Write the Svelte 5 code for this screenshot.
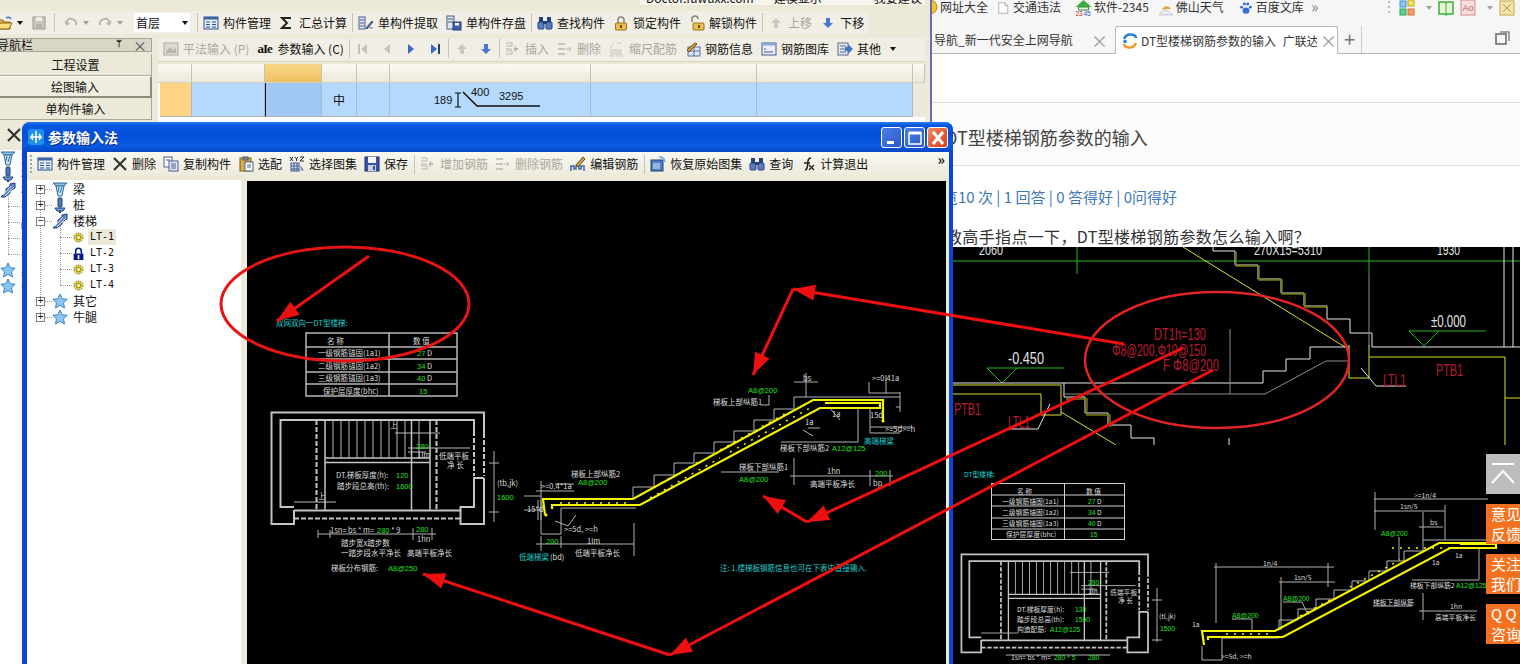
<script>
  // icon bodies, 16x16 unless noted
  const icons = {
    folder: `<path d="M1 5h5l1 2h6v7H1z" fill="#e8b93a" stroke="#8a6a14"/><path d="M3 8h12l-3 6H1z" fill="#f7dd7a" stroke="#8a6a14"/><path d="M9 3q3-2 5 1" fill="none" stroke="#3a6cc8" stroke-width="1.5"/>`,
    saveg: `<rect x="2" y="2" width="12" height="12" fill="#c9c7bd" stroke="#9c9a90"/><rect x="5" y="2" width="6" height="4" fill="#eeece4"/><rect x="5" y="9" width="6" height="5" fill="#b5b3a8"/>`,
    undo: `<path d="M3 9q1-6 6-5t4 6" fill="none" stroke="#b9b7ab" stroke-width="2"/><path d="M1 6l3 5 3-3z" fill="#b9b7ab"/>`,
    redo: `<path d="M13 9q-1-6-6-5t-4 6" fill="none" stroke="#b9b7ab" stroke-width="2"/><path d="M15 6l-3 5-3-3z" fill="#b9b7ab"/>`,
    list: `<rect x="1" y="2" width="14" height="12" fill="#e4edf8" stroke="#2f4f8f"/><rect x="1" y="2" width="14" height="2.5" fill="#3a64a8"/><path d="M3 7h4M3 9.500h4M3 12h4M9 7h4M9 9.500h4M9 12h4" stroke="#2f4f8f"/>`,
    sigma: `<path d="M13 3H4l5 5-5 5h9" transform="translate(-1)" fill="none" stroke="#222" stroke-width="2"/>`,
    extract: `<rect x="1" y="2" width="6" height="12" fill="#dfe6f2" stroke="#4a5f8a"/><path d="M2 5h4M2 8h4M2 11h4" stroke="#4a5f8a"/><path d="M8 13l6-7 1 1-6 7z" fill="#4e79b8" stroke="#2f4f8f"/><path d="M9 11l3 2h3" fill="none" stroke="#777"/>`,
    store: `<rect x="1" y="1" width="7" height="13" fill="#dfe6f2" stroke="#4a5f8a"/><path d="M2 4h5M2 7h5" stroke="#4a5f8a"/><rect x="7" y="7" width="8" height="8" fill="#3e5fa8" stroke="#26407a"/><rect x="9" y="8" width="4" height="2.500" fill="#fff"/>`,
    bino: `<rect x="2" y="2" width="4" height="5" fill="#26407a"/><rect x="10" y="2" width="4" height="5" fill="#26407a"/><rect x="1" y="7" width="6" height="7" rx="1" fill="#5a7fc0" stroke="#26407a"/><rect x="9" y="7" width="6" height="7" rx="1" fill="#5a7fc0" stroke="#26407a"/><rect x="6" y="6" width="4" height="3" fill="#26407a"/>`,
    lock: `<path d="M5 8V5a3 3 0 0 1 6 0v3" fill="none" stroke="#8a8578" stroke-width="1.500"/><rect x="2.500" y="8" width="11" height="7" rx="1" fill="#e9bf55" stroke="#9a7416"/><rect x="7" y="10" width="2" height="3" fill="#6a4c08"/>`,
    unlock: `<path d="M3 7V4a3 3 0 0 1 6 0" fill="none" stroke="#8a8578" stroke-width="1.500"/><rect x="4" y="8" width="11" height="7" rx="1" fill="#e9bf55" stroke="#9a7416"/><rect x="9" y="10" width="2" height="3" fill="#6a4c08"/>`,
    upg: `<path d="M8 3l5 5h-3v5H6V8H3z" fill="#ccc9bc"/>`,
    downb: `<path d="M8 13l5-5h-3V3H6v5H3z" fill="#4a78d0"/>`,
    pingfa: `<rect x="1" y="2" width="14" height="12" fill="#dcdad0" stroke="#aeaca0"/><path d="M3 11l4-5 3 3 3-2v5H3z" fill="#b8b6aa"/>`,
    first: `<rect x="3" y="3" width="2" height="10" fill="#c5c3b7"/><path d="M12 3v10L6 8z" fill="#c5c3b7"/>`,
    prev: `<path d="M11 3v10L5 8z" fill="#c5c3b7"/>`,
    next: `<path d="M5 3v10l6-5z" fill="#3a68c8"/>`,
    last: `<path d="M4 3v10l6-5z" fill="#3a68c8"/><rect x="11" y="3" width="2" height="10" fill="#26407a"/>`,
    ins: `<path d="M1 2h6M7 2v3H1M1 8h6M1 13h6M7 13v-3H1" fill="none" stroke="#b9b7ab"/><path d="M9 8h4" stroke="#b9b7ab" stroke-width="2"/><path d="M11 5l-2 3 2 3" fill="none" stroke="#b9b7ab"/>`,
    del: `<path d="M1 3h7M1 8h7M1 13h7" stroke="#b9b7ab" stroke-width="1.500"/><path d="M9 8h5M12 6l2 2-2 2" fill="none" stroke="#b9b7ab"/>`,
    scale: `<path d="M2 15V5M2 15h12M2 5l2-3M8 2h5" fill="none" stroke="#b9b7ab" stroke-dasharray="1.500 1"/><path d="M4 14V8M6 14V8M8 14V8M10 14V8M12 14V8" stroke="#c9c7bb"/>`,
    info: `<rect x="3" y="6" width="12" height="9" fill="#dce6f4" stroke="#5a72a0"/><path d="M3 10h12M9 6v9" stroke="#5a72a0"/><path d="M2 9l8-7 2 1-8 8z" fill="#d9a042" stroke="#6a4c08"/>`,
    lib: `<rect x="1" y="2" width="14" height="12" fill="#e9eef7" stroke="#3e5a90"/><rect x="1" y="2" width="14" height="2.500" fill="#8aa6d4"/><path d="M3 8h2M3 11h9" stroke="#3e5a90"/>`,
    other: `<rect x="1" y="2" width="10" height="12" fill="#e4e8f0" stroke="#5a6a88"/><path d="M3 5h6M3 8h6M3 11h6" stroke="#5a6a88"/><path d="M8 6h3V3l5 5-5 5v-3H8z" fill="#3f78c8"/>`,
    cross: `<path d="M2 2l12 12M14 2L2 14" stroke="#333" stroke-width="2.200"/>`,
    copy: `<rect x="1" y="1" width="8" height="10" fill="#fff" stroke="#4a5f8a"/><rect x="6" y="5" width="9" height="10" fill="#dfe8f6" stroke="#4a5f8a"/><path d="M8 8h5M8 10h5M8 12h5M3 4h4" stroke="#4a5f8a"/>`,
    paste: `<rect x="2" y="2" width="11" height="13" fill="#d9ae4e" stroke="#7a5c14"/><rect x="5" y="1" width="5" height="3" fill="#888" stroke="#555"/><rect x="7" y="6" width="8" height="9" fill="#fff" stroke="#4a5f8a"/><path d="M9 9h4M9 11h4" stroke="#4a5f8a"/>`,
    xyz: `<rect x="2" y="7" width="8" height="8" fill="#dce4f2" stroke="#3e5a90"/><path d="M2 10h8M2 13h8M5 7v8M8 7v8" stroke="#3e5a90"/><path d="M1 1l3 4M4 1L1 5M6 1l1.500 2L9 1M7.500 3v2M11 1h4l-4 4h4" fill="none" stroke="#222"/><path d="M11 9l4 5-3 1z" fill="#8a8a9a"/>`,
    saveb: `<rect x="1" y="1" width="14" height="14" fill="#3a4fa8" stroke="#1e2c70"/><rect x="4" y="1" width="8" height="6" fill="#f4f4f4"/><rect x="4" y="9" width="8" height="6" fill="#c9cde0"/><rect x="9" y="10" width="2" height="4" fill="#3a4fa8"/>`,
    edit: `<path d="M1 15V10h3v3h2v-3h3v3h2v-3h3v5" fill="none" stroke="#3a68a8" stroke-width="1.500"/><path d="M6 9l7-8 2 2-7 8z" fill="#c9a05a" stroke="#6a4c08"/>`,
    restore: `<rect x="1" y="4" width="12" height="11" fill="#4d7cc2" stroke="#26407a"/><path d="M3 8h7M3 10h7M3 12h7" stroke="#e4edf8"/><path d="M9 1q5 0 6 5" fill="none" stroke="#8ab0e8" stroke-width="2"/>`,
    fx: `<path d="M5 14q2 0 2.500-4l.5-5q.5-3 3-3" fill="none" stroke="#222" stroke-width="1.600"/><path d="M4 7h6M9 9l5 5M14 9l-5 5" stroke="#222" stroke-width="1.300"/>`,
    beam: `<path d="M1 2h14l-3 3H4z" fill="#8ec4e8" stroke="#2a6a9a"/><path d="M4 5h8l-2 10H6z" fill="#c6e4f6" stroke="#2a6a9a"/><path d="M7 6l-1 5M10 6l-2 6" stroke="#2a6a9a"/>`,
    pile: `<rect x="6" y="1" width="4" height="9" rx="1" fill="#4a7cb8" stroke="#1e3f78"/><path d="M3 11h10l-2 3H5z" fill="#6f9fd4" stroke="#1e3f78"/><rect x="7" y="14" width="2" height="2" fill="#1e3f78"/>`,
    stairs: `<path d="M1 15l5-5V7l4-3V2l5-1v5l-5 3v2l-5 4z" fill="#5f86c8" stroke="#1e3f78"/><path d="M3 13l8-9M5 14l9-9" stroke="#d4e2f6"/>`,
    gear: `<circle cx="8" cy="8" r="5.500" fill="#f0e040" stroke="#555" stroke-dasharray="2 1"/><circle cx="8" cy="8" r="3" fill="none" stroke="#776a10"/><circle cx="8" cy="8" r="1.200" fill="#fff"/>`,
    pad: `<path d="M4.500 8V5a3.500 3.500 0 0 1 7 0v3" fill="none" stroke="#0a1a8a" stroke-width="2"/><rect x="2" y="8" width="12" height="8" fill="#0a1a8a"/><rect x="7" y="10" width="2" height="5" fill="#fff"/>`,
    star: `<path d="M8 1l2.200 4.700 5 .6-3.700 3.500 1 5.200L8 12.400 3.500 15l1-5.200L.8 6.300l5-.6z" fill="#8cc4f0" stroke="#3a86c8"/>`,
    ball: `<circle cx="8" cy="7" r="7" fill="#f2c81e" stroke="#b88a10"/>`,
    page: `<path d="M1 1h8l4 4v10H1z" fill="#fff" stroke="#999"/><path d="M9 1v4h4" fill="none" stroke="#999"/>`,
    house: `<path d="M8 0L0 7h16z" fill="#3cae3c"/><path d="M3 7h10v3H3z" fill="#e8f4e0" stroke="#3a8a3a"/><text x="0" y="15.500" font-size="6.500" font-family="Liberation Sans" fill="#d02020">23</text><text x="8" y="15.500" font-size="6.500" font-family="Liberation Sans" fill="#2060c0">45</text>`,
    sun: `<path d="M1 15l5-6 4 2 5 4z" fill="#e8ecf2" stroke="#c4c8d0"/><path d="M4 9a5 5 0 0 1 9 0z" fill="#f0a030"/>`,
    paw: `<ellipse cx="8" cy="11" rx="4" ry="3.500" fill="#3b6fd8"/><circle cx="3" cy="7" r="1.700" fill="#3b6fd8"/><circle cx="6.200" cy="3.500" r="1.700" fill="#3b6fd8"/><circle cx="10" cy="3.500" r="1.700" fill="#3b6fd8"/><circle cx="13" cy="7" r="1.700" fill="#3b6fd8"/>`,
    brand: `<path d="M2 6q2-5 7-4.500T14 5" fill="none" stroke="#2a7fd4" stroke-width="2.500"/><path d="M14 10q-2 5-7 4.500T2 11" fill="none" stroke="#f29a2e" stroke-width="2.500"/><circle cx="3" cy="8.500" r="1.800" fill="#2a7fd4"/>`,
    apps: `<rect x="1" y="1" width="6" height="6" fill="#8ec4f0" stroke="#4090d8" /><rect x="9" y="0" width="6" height="6" fill="#f8e060" stroke="#c8a810"/><rect x="1" y="9" width="6" height="6" fill="#60d090" stroke="#28a060"/><rect x="9" y="9" width="6" height="6" fill="#f4a070" stroke="#d87030"/>`,
    book: `<path d="M1 2h6l1 1 1-1h6v12H9l-1 1-1-1H1z" fill="#e6f6d0" stroke="#3cae3c" stroke-width="1.500"/><path d="M8 3v11" stroke="#3cae3c"/>`,
    ad: `<rect x="1" y="0" width="14" height="15" fill="#f8dede" stroke="#d88"/><text x="2.500" y="11" font-size="9" font-family="Liberation Sans" fill="#b86868">Ao</text>`,
    bag: `<rect x="1" y="1" width="14" height="14" fill="#f2e6b0" stroke="#c4a648"/><path d="M4 4l8 8M12 4l-8 8" stroke="#d09030"/>`,
    windows: `<rect x="1" y="3" width="10" height="10" fill="none" stroke="#666" stroke-width="1.500"/><path d="M5 1h9v9" fill="none" stroke="#888" stroke-width="1.500"/>`
  };

  const row1 = [
    { icon: 'list', label: '构件管理' }, { icon: 'sigma', label: '汇总计算' }, 'sep',
    { icon: 'extract', label: '单构件提取' }, { icon: 'store', label: '单构件存盘' }, 'sep',
    { icon: 'bino', label: '查找构件' }, { icon: 'lock', label: '锁定构件' }, { icon: 'unlock', label: '解锁构件' }, 'sep',
    { icon: 'upg', label: '上移', off: true }, { icon: 'downb', label: '下移' }
  ];
  const row2 = [
    { icon: 'pingfa', label: '平法输入 (P)', off: true }, { glyph: 'aIe', label: '参数输入 (C)' }, 'sep',
    { icon: 'first' }, { icon: 'prev' }, { icon: 'next' }, { icon: 'last' }, 'sep',
    { icon: 'upg' }, { icon: 'downb' }, 'sep',
    { icon: 'ins', label: '插入', off: true }, { icon: 'del', label: '删除', off: true }, { icon: 'scale', label: '缩尺配筋', off: true },
    { icon: 'info', label: '钢筋信息' }, { icon: 'lib', label: '钢筋图库' }, { icon: 'other', label: '其他', drop: true }
  ];
  const row3 = [
    { icon: 'list', label: '构件管理' }, { icon: 'cross', label: '删除' }, { icon: 'copy', label: '复制构件' }, { icon: 'paste', label: '选配' },
    { icon: 'xyz', label: '选择图集' }, { icon: 'saveb', label: '保存' }, 'sep',
    { icon: 'ins', label: '增加钢筋', off: true }, { icon: 'del', label: '删除钢筋', off: true }, { icon: 'edit', label: '编辑钢筋' }, 'sep',
    { icon: 'restore', label: '恢复原始图集' }, { icon: 'bino', label: '查询' }, { icon: 'fx', label: '计算退出' }
  ];

  const tree = [
    { icon: 'beam', label: '梁', exp: '+' }, { icon: 'pile', label: '桩', exp: '+' }, { icon: 'stairs', label: '楼梯', exp: '-' },
    { icon: 'gear', label: 'LT-1', sel: true }, { icon: 'pad', label: 'LT-2' }, { icon: 'gear', label: 'LT-3' }, { icon: 'gear', label: 'LT-4' },
    { icon: 'star', label: '其它', exp: '+' }, { icon: 'star', label: '牛腿', exp: '+' }
  ];

  const columns = ['', '', '', '', '', '', '', '', ''];
  const marks = [
    { icon: 'ball', label: '网址大全', ml: -10, w: 16, gap: 2 }, { icon: 'page', label: '交通违法', ml: 10, w: 12, gap: 3 },
    { icon: 'house', label: '软件-2345', ml: 14, w: 17, gap: 2 }, { icon: 'sun', label: '佛山天气', ml: 9, w: 16, gap: 2 },
    { icon: 'paw', label: '百度文库', ml: 15, w: 14, gap: 3 }
  ];
  const floats = ['意见\n反馈', '关注\n我们', 'Q Q\n咨询'];

  // cad text: x, baseline y, text, class
  const sheet1 = [
    [276, 326, '双网双向一DT型楼梯:', 'c'], [327, 344, '名  称', 'w'], [413, 344, '数  值', 'w'],
    [318, 356, '一级钢筋锚固(1a1)', 'w'], [417, 356, '27', 'g'], [427, 356, 'D', 'w'],
    [318, 369, '二级钢筋锚固(1a2)', 'w'], [417, 369, '34', 'g'], [427, 369, 'D', 'w'],
    [318, 381, '三级钢筋锚固(1a3)', 'w'], [417, 381, '40', 'g'], [427, 381, 'D', 'w'],
    [323, 394, '保护层厚度(bhc)', 'w'], [419, 394, '15', 'g'],
    [336, 478, 'DT.梯板厚度(h):', 'w'], [396, 478, '120', 'g'], [337, 489, '踏步段总高(th):', 'w'], [396, 489, '1600', 'g'],
    [416, 449, '280', 'g'], [417, 458, '1lm', 'w'], [439, 459, '低端平板', 'w'], [447, 468, '净   长', 'w'],
    [390, 428, '上', 'w'], [318, 499, '上', 'w'], [330, 533, '1sn= bs * m=', 'w'], [377, 533, '280', 'g'], [391, 533, '* 9', 'w'],
    [416, 532, '280', 'g'], [417, 542, '1hn', 'w'], [341, 546, '踏步宽x踏步数', 'w'], [341, 556, '一踏步段水平净长', 'w'], [407, 556, '高端平板净长', 'w'],
    [331, 571, '梯板分布钢筋:', 'w'], [388, 571, 'A8@250', 'g'], [497, 486, '(tb,jk)', 'w'], [497, 500, '1600', 'g'],
    [748, 393, 'A8@200', 'g'], [713, 405, '梯板上部纵筋1', 'w'], [803, 381, 'bs', 'w'], [872, 381, '>=0.41a', 'w'],
    [832, 417, '1a', 'w'], [805, 425, '1a', 'w'], [870, 418, '15d', 'w'], [885, 432, '>=5d>=h', 'w'], [864, 444, '高端梯梁', 'c'],
    [780, 451, '梯板下部纵筋2', 'w'], [832, 451, 'A12@125', 'g'], [739, 470, '梯板下部纵筋1', 'w'], [739, 482, 'A8@200', 'g'],
    [827, 474, '1hn', 'w'], [810, 487, '高端平板净长', 'w'], [875, 476, '200', 'g'], [873, 486, 'bp', 'w'],
    [571, 477, '梯板上部纵筋2', 'w'], [578, 485, 'A8@200', 'g'], [541, 489, '>=0.4*1a', 'w'], [527, 512, '15*d', 'w'], [564, 532, '>=5d, >=h', 'w'],
    [546, 544, '200', 'g'], [587, 544, '1lm', 'w'], [519, 560, '低端梯梁', 'c'], [550, 560, '(bd)', 'w'], [575, 556, '低端平板净长', 'w'],
    [720, 571, '注: 1.楼梯板钢筋信息也可在下表中直接输入.', 'c']
  ];
  const sheet2 = [
    [964, 477, 'DT型楼梯:', 'c'], [1017, 494, '名  称', 'w'], [1086, 494, '数  值', 'w'],
    [1002, 504, '一级钢筋锚固(1a1)', 'w'], [1088, 504, '27', 'g'], [1097, 504, 'D', 'w'],
    [1002, 515, '二级钢筋锚固(1a2)', 'w'], [1088, 515, '34', 'g'], [1097, 515, 'D', 'w'],
    [1002, 526, '三级钢筋锚固(1a3)', 'w'], [1088, 526, '40', 'g'], [1097, 526, 'D', 'w'],
    [1006, 537, '保护层厚度(bhc)', 'w'], [1090, 537, '15', 'g'],
    [1017, 612, 'DT.梯板厚度(h):', 'w'], [1075, 612, '130', 'g'], [1017, 622, '踏步段总高(th):', 'w'], [1075, 622, '1500', 'g'],
    [1017, 632, '构造配筋:', 'w'], [1050, 632, 'A12@125', 'g'], [1088, 585, '280', 'g'], [1088, 594, '1ln', 'w'], [1110, 595, '低端平板', 'w'], [1118, 603, '净  长', 'w'],
    [1011, 660, '1sn= bs * m=', 'w'], [1054, 660, '280 * 5', 'g'], [1088, 660, '280', 'g'], [1159, 619, '(tl,jk)', 'w'], [1160, 631, '1500', 'g'],
    [1192, 627, '1a', 'w'], [1221, 659, '>=5d, >=h', 'w'], [1263, 566, '1n/4', 'w'], [1294, 580, '1sn/5', 'w'], [1414, 498, '>=1n/4', 'w'],
    [1400, 509, '1sn/5', 'w'], [1430, 525, 'bs', 'w'], [1283, 601, 'A8@200', 'g'], [1232, 618, 'A8@200', 'g'], [1381, 536, 'A8@200', 'g'],
    [1410, 588, '梯板下部纵筋2', 'w'], [1456, 588, 'A12@125', 'g'], [1373, 605, '梯板下部纵筋', 'w'], [1450, 609, '1hn', 'w'], [1435, 620, '高端平板净长', 'w'],
    [1432, 565, '1a', 'w'], [1455, 558, '1a', 'w']
  ];

  // arrow head polygon, tip at (x2,y2)
  function head(x1, y1, x2, y2, len = 22, half = 8) {
    const d = Math.hypot(x2 - x1, y2 - y1);
    const ux = (x2 - x1) / d, uy = (y2 - y1) / d;
    const bx = x2 - ux * len, by = y2 - uy * len;
    return `${x2},${y2} ${bx - uy * half},${by + ux * half} ${bx + uy * half},${by - ux * half}`;
  }
  const arrows = [
    [369, 256, 277, 321], [1124, 344, 793, 289], [793, 289, 753, 375],
    [1183, 348, 807, 522], [807, 522, 763, 496], [1213, 370, 670, 655], [670, 655, 423, 574]
  ];
</script>

{#snippet toolbar(items)}
  {#each items as it}
    {#if it === 'sep'}
      <i class="sep"></i>
    {:else}
      <span class="tb-item" class:off={it.off}>
        {#if it.glyph}<b class="glyph">{it.glyph}</b>{:else}<svg class="ico" viewBox="0 0 16 16">{@html icons[it.icon]}</svg>{/if}
        {#if it.label}<span>{it.label}</span>{/if}
        {#if it.drop}<i class="caret"></i>{/if}
      </span>
    {/if}
  {/each}
{/snippet}

{#snippet treeView()}
  <div class="tree">
    {#each tree as n}
      <div class="node" class:child={!n.exp}>
        {#if n.exp}<span class="exp">{n.exp === '+' ? '+' : '−'}</span><i class="stub"></i>{:else}<i class="stub"></i>{/if}
        <svg class="ico" viewBox="0 0 16 16">{@html icons[n.icon]}</svg>
        <span class="nlabel" class:sel={n.sel} class:mono={!n.exp}>{n.label}</span>
      </div>
    {/each}
  </div>
{/snippet}

{#snippet planLines()}
  <g class="wall">
    <path d="M294 510V524H271.500V412.500H484V438M484 478V524H460.500V507H474V478H484M474 436V420H280.500V507H294" />
    <path d="M294 510.500H460" />
    <path class="dash" d="M294 518.500H460M484 440V476M474 438V476M316.500 420V510M436.500 420V510" />
    <path class="thin" d="M325 420V510M411.500 420V510M430 420V510M325 458H430M325 462.500H430" />
    <path class="tread" d="M333 420V458M341 420V458M349 420V458M357 420V458M365 420V458M373 420V458M381 420V458M389 420V458M397 420V458M405 420V458M419 420V458" />
    <path class="tread" d="M395 433H440M294 502H336M408 448H470M408 452H426" />
  </g>
{/snippet}

<div class="desktop">
  <!-- rebar software behind -->
  <section class="app">
    <div class="app-top">
      <div class="help">
        <span>Doctor.fuwuxx.com</span>
        <span class="h2">建模显示</span>
        <span class="h3">我要建议</span>
      </div>
    </div>
    <div class="bar bar-main">
      <svg class="ico lead" viewBox="0 0 16 16">{@html icons.folder}</svg><i class="caret mini"></i>
      <svg class="ico" viewBox="0 0 16 16">{@html icons.saveg}</svg><i class="sep wide"></i>
      <svg class="ico" viewBox="0 0 16 16">{@html icons.undo}</svg><i class="caret mini grey"></i>
      <svg class="ico" viewBox="0 0 16 16">{@html icons.redo}</svg><i class="caret mini grey"></i>
      <div class="combo">首层<i class="caret"></i></div>
      <i class="sep"></i>
      {@render toolbar(row1)}
    </div>
    <div class="work">
      <aside class="side">
        <div class="dock-head">
          <span>导航栏</span>
          <span class="dock-btns"><b>ᛘ</b><b class="x">×</b></span>
        </div>
        <button class="nav-btn">工程设置</button>
        <button class="nav-btn raised">绘图输入</button>
        <button class="nav-btn">单构件输入</button>
        <div class="side-x"><svg class="ico" viewBox="0 0 16 16">{@html icons.cross}</svg></div>
        <div class="side-tree">{@render treeView()}</div>
      </aside>
      <div class="main">
        <div class="bar bar-sub">{@render toolbar(row2)}</div>
        <div class="grid">
          {#each columns as _, i}<div class="gh" class:hot={i === 2}></div>{/each}
          <div class="gc rowhead"></div>
          <div class="gc"></div>
          <div class="gc active"></div>
          <div class="gc sym">中</div>
          <div class="gc"></div>
          <div class="gc shape">
            <svg width="201" height="33" viewBox="390 83 201 33">
              <text x="434" y="104" class="num">189</text>
              <path d="M458 93v14M455 93h6M455 107h6" stroke="#111" fill="none" stroke-width="1.200"/>
              <path d="M463 92l14 14h63" stroke="#111" fill="none" stroke-width="1.500"/>
              <text x="471" y="96" class="num">400</text>
              <text x="499" y="100" class="num">3295</text>
            </svg>
          </div>
          <div class="gc"></div>
          <div class="gc"></div>
          <div class="gc last"></div>
        </div>
      </div>
    </div>
  </section>

  <!-- browser behind, on the right -->
  <section class="browser">
    <div class="bookmarks">
      {#each marks as m}
        <span class="mark" style="margin-left:{m.ml}px;gap:{m.gap}px">
          <svg width={m.w} height="16" viewBox="0 0 16 16">{@html icons[m.icon]}</svg>{m.label}
        </span>
      {/each}
      <span class="more">»</span>
      <span class="tools">
        <i class="dots"></i>
        <svg class="ico" viewBox="0 0 16 16">{@html icons.apps}</svg><i class="caret grey"></i>
        <svg class="ico" viewBox="0 0 16 16">{@html icons.book}</svg>
        <svg class="ico" viewBox="0 0 16 16">{@html icons.ad}</svg><i class="caret grey"></i>
        <svg class="ico" viewBox="0 0 16 16">{@html icons.bag}</svg>
      </span>
    </div>
    <div class="tabs">
      <div class="tab">导航_新一代安全上网导航<span class="tx">×</span></div>
      <div class="tab on">
        <svg class="ico" viewBox="0 0 16 16">{@html icons.brand}</svg>
        <span class="tab-t">DT型楼梯钢筋参数的输入_广联达</span><span class="tx">×</span>
      </div>
      <span class="plus">+</span>
      <svg class="ico win" viewBox="0 0 16 16">{@html icons.windows}</svg>
    </div>
    <div class="page">
      <div class="page-top"></div>
      <h1>DT型楼梯钢筋参数的输入</h1>
      <p class="stats">览10 次 | 1 回答 | 0 答得好 | 0问得好</p>
      <p class="ask">教高手指点一下，DT型楼梯钢筋参数怎么输入啊？</p>
      <div class="photo">
        <svg width="567" height="417" viewBox="953 247 567 417">
          <g class="cad">
            <path class="gr" d="M953 261H1520M1077 247V274M1369 247V274M1064 368H987L1002 383L1017 368M1486 331H1409L1424 346L1439 331" />
            <path class="wh" d="M1213 247V251H1235V265H1258V279H1281V293H1304V306H1327V319H1350V333H1372V347H1520M1504 247V347M1513 247V347" />
            <path class="ol" d="M1236 252V266H1259V280H1282V294H1305V307H1328" />
            <path class="ye" d="M1183 247L1345 347M1061 412L1116 445M1369 345V378H1349V345M1369 357H1505V445M1505 398H1520M953 385H1061V415H1041V394H953" />
            <path class="wh" d="M953 383H1263V371H1286V359H1310V347H1349M1064 383V397H1085V413H1108V425H1131V438H1154V445M1361 368L1376 386H1406M1050 404L1038 429H1008M1229 438V445" />
            <path class="ol" d="M1066 399H1087V415H1110V427" />
            <path class="gy" d="M1063 394H1265L1326 361H1349M1230 329V394M1369 274V347" />
            <text class="big" x="979" y="255" font-size="14" textLength="24" lengthAdjust="spacingAndGlyphs">2060</text>
            <text class="big" x="1254" y="255" font-size="14" textLength="68" lengthAdjust="spacingAndGlyphs">270X15=5310</text>
            <text class="big" x="1437" y="255" font-size="14" textLength="23" lengthAdjust="spacingAndGlyphs">1930</text>
            <text class="big" x="1431" y="327" font-size="17" textLength="35" lengthAdjust="spacingAndGlyphs">±0.000</text>
            <text class="big" x="1008" y="364" font-size="16" textLength="36" lengthAdjust="spacingAndGlyphs">-0.450</text>
            <text class="rd" x="1436" y="376" textLength="27" lengthAdjust="spacingAndGlyphs">PTB1</text>
            <text class="rd" x="1383" y="386" textLength="23" lengthAdjust="spacingAndGlyphs">LTL1</text>
            <text class="rd" x="954" y="415" textLength="27" lengthAdjust="spacingAndGlyphs">PTB1</text>
            <text class="rd" x="1008" y="428" textLength="22" lengthAdjust="spacingAndGlyphs">LTL1</text>
            <text class="rd" x="1154" y="340" textLength="52" lengthAdjust="spacingAndGlyphs">DT1h=130</text>
            <text class="rd" x="1112" y="356" textLength="94" lengthAdjust="spacingAndGlyphs">Φ8@200,Φ10@150</text>
            <text class="rd" x="1163" y="371" textLength="56" lengthAdjust="spacingAndGlyphs">F Φ8@200</text>
            <text class="big" x="1234" y="455" font-size="14" textLength="50" lengthAdjust="spacingAndGlyphs">ATB1 120</text>
            <rect x="953" y="445" width="567" height="12" fill="#000"/>

            <rect class="tb" x="991.500" y="483.500" width="133" height="56"/>
            <path class="tb" d="M991 495H1124M991 506H1124M991 518H1124M991 529H1124M1064.500 483V539"/>
            <g transform="translate(961 554) scale(.878) translate(-271 -412)">{@render planLines()}</g>
            <path class="th" d="M1157 588V642M1152 600H1162M1152 640H1162M1006 655H1110M1374 499H1488M1375 492V530M1374 511H1445M1445 505V540M1419 527H1443M1423 512V540M1399 537V560M1214 567H1334M1216 563V623M1328 563V587M1279 582H1335M1281 577V630M1283 602H1302L1308 615M1232 619H1252V630M1479 548V580H1412M1419 611H1477M1423 593V620M1373 606H1412"/>
            <path class="st" d="M1279 630V620H1298V609H1316V599H1334V590H1352V581H1369V571H1387V561H1404V551H1423V540H1520M1202 646V660H1222V638H1279"/>
            <path class="yb" d="M1204 645L1202 631H1275L1439 543H1520"/>
            <path class="yb" d="M1208 640V637H1283L1450 548H1496V544H1460"/>
            <path class="yd" d="M1226 634H1268M1300 616L1330 600M1350 587L1400 560M1392 548H1480"/>
            {#each sheet2 as [x, y, t, c]}<text class="t {c} sm" {x} {y}>{t}</text>{/each}
          </g>
        </svg>
      </div>
    </div>
  </section>

  <!-- side buttons of the page -->
  <nav class="float">
    <div class="to-top">
      <svg width="30" height="24" viewBox="0 0 30 24"><path d="M4 2h22M4 21L15 9l11 12" fill="none" stroke="#fff" stroke-width="2"/></svg>
    </div>
    {#each floats as f}<div class="fbtn">{f}</div>{/each}
  </nav>

  <!-- dialog window on top -->
  <section class="dialog">
    <header class="title">
      <span class="title-ico">
        <svg width="14" height="14" viewBox="0 0 14 14"><path d="M7 1v12M1 7h12M4 4l-2 3 2 3M10 4l2 3-2 3" fill="none" stroke="#fff" stroke-width="1.500"/></svg>
      </span>
      <span class="title-t">参数输入法</span>
      <span class="wbtns">
        <i class="wb"><svg width="20" height="20" viewBox="0 0 20 20"><rect x="5" y="13" width="7" height="3" fill="#fff"/></svg></i>
        <i class="wb"><svg width="20" height="20" viewBox="0 0 20 20"><path d="M4 5h12v11H4z" fill="none" stroke="#fff" stroke-width="1.500"/><path d="M4 5h12" stroke="#fff" stroke-width="3"/></svg></i>
        <i class="wb close"><svg width="20" height="20" viewBox="0 0 20 20"><path d="M5 4l10 12M15 4L5 16" stroke="#fff" stroke-width="3"/></svg></i>
      </span>
    </header>
    <div class="bar bar-dlg">
      <i class="grip"></i>
      {@render toolbar(row3)}
      <span class="chev">»</span>
    </div>
    <div class="dlg-body">
      <div class="dlg-tree">{@render treeView()}</div>
      <div class="canvas">
        <svg width="699" height="483" viewBox="247 181 699 483">
          <g class="cad">
            <rect class="tb2" x="306" y="333" width="151" height="63"/>
            <path class="tb2" d="M306 347H457M306 359H457M306 372H457M306 384H457M389 333V396"/>
            {@render planLines()}
            <path class="th" d="M318 534H436M318 530V538M330 530V538M413 528V540M432 528V540M494 451V522M489 463H499M489 512H499"/>
            <path class="st" d="M633 498V487H654V475H674V463H694V453H714V442H734V431H754V420H774V409H794V397H900"/>
            <path class="st" d="M541 500V534H561V508H636M858 408V442H781M870 408V433H900M761 405H769V395M721 472H779"/>
            <path class="th" d="M541 481V520M536 491H574M538 500V520M524 496H541M524 510H541M536 544H634M541 536V551M561 536V548M634 523V556M555 484H574M806 373V397M794 382H818M869 382V393H900M886 375V393M900 392V412M896 407H900M870 427H912M790 476H893M794 458V485M870 470V486M890 470V486M829 407L840 420M808 428H820M803 430L813 436M576 515L568 526M555 521L568 526"/>
            <path class="yb" d="M545 515L543 499H633L813 400H883V422"/>
            <path class="yb" d="M552 509V505H640L820 408H880V403H825"/>
            <path class="yd" d="M560 503H628M640 495L700 461M720 450L790 411M830 403H872M650 498L720 458M730 452L810 408"/>
            <circle cx="546" cy="515" r="1.500" fill="#ff0"/><circle cx="883" cy="421" r="1.500" fill="#ff0"/>
            {#each sheet1 as [x, y, t, c]}<text class="t {c}" {x} {y}>{t}</text>{/each}
          </g>
        </svg>
      </div>
    </div>
  </section>

  <!-- red marks someone drew over the screenshot -->
  <svg class="annot" viewBox="0 0 1520 664" width="1520" height="664">
    <ellipse cx="345" cy="304" rx="124" ry="57" fill="none" stroke="#e81414" stroke-width="3"/>
    <ellipse cx="1217" cy="360" rx="132" ry="68" fill="none" stroke="#e02424" stroke-width="2.500"/>
    {#each arrows as [a, b, c, d]}
      <line x1={a} y1={b} x2={c} y2={d} stroke="#ee1010" stroke-width="3"/>
      <polygon points={head(a, b, c, d)} fill="#ee1010"/>
    {/each}
  </svg>
</div>

<style>
  :global(body) { margin: 0; background: #ece9d8; }
  .desktop {
    position: relative; width: 1520px; height: 664px; overflow: hidden;
    font-family: "Noto Sans CJK SC", "Liberation Sans", sans-serif; font-size: 12px; color: #111; background: #ece9d8;
  }
  .ico { width: 16px; height: 16px; flex: none; display: block; }
  .desktop svg text { font-family: "Noto Sans CJK SC", "Liberation Sans", sans-serif; }

  /* back window */
  .app {
    position: absolute; left: 0; top: 0; width: 930px; height: 664px; background: #ece9d8;
    border-right: 2px solid #6a6ab4; display: flex; flex-direction: column;
  }
  .app-top { height: 11px; overflow: hidden; flex: none; }
  .help {
    margin-left: 640px; width: 285px; height: 5px; background: #f6f4ec; display: flex;
    padding-left: 6px; box-sizing: border-box; overflow: hidden; line-height: 1; font-size: 12px;
  }
  .help span { margin-top: -8px; white-space: nowrap; }
  .help .h2 { margin-left: 20px; }
  .help .h3 { margin-left: 52px; }
  .bar { display: flex; align-items: center; white-space: nowrap; flex: none; }
  .bar-main { height: 23px; width: 868px; padding-left: 0; background: #f1efe5; box-sizing: border-box; }
  .lead { margin-left: -3px; }
  .caret {
    display: inline-block; width: 0; height: 0; border: 3px solid transparent; border-top: 4px solid #111; border-bottom: 0; margin-left: 5px; flex: none;
  }
  .caret.grey { border-top-color: #a5a399; }
  .caret.mini { margin: 0 8px 0 4px; }
  .sep { width: 1px; height: 19px; background: #c8c5b4; margin: 0 5px 0 -3px; flex: none; display: block; }
  .sep.wide { margin: 0 8px 0 7px; }
  .combo {
    width: 56px; height: 19px; margin: 0 7px 0 3px; background: #fff; box-sizing: border-box; padding-left: 2px;
    display: flex; align-items: center; justify-content: space-between; padding-right: 2px; line-height: 1; flex: none; font-size: 12px;
  }
  .combo + .sep { margin-left: 0; }
  .tb-item { display: flex; align-items: center; gap: 4px; margin-right: 8px; line-height: 1; flex: none; }
  .tb-item.off { color: #aaa89c; }
  .glyph { width: 16px; font: 700 13px "Liberation Serif", serif; letter-spacing: -1px; color: #111; }

  .work { display: flex; flex: 1; margin-top: 4px; min-height: 0; }
  .side { width: 152px; margin-right: 6px; flex: none; display: flex; flex-direction: column; }
  .dock-head {
    height: 12px; background: #d9d6c6; border: 1px solid #a6a493; border-left: 0; margin-bottom: 2px; flex: none;
    display: flex; justify-content: space-between; align-items: center; line-height: 1; font-size: 12px; text-indent: -3px; box-sizing: content-box;
  }
  .dock-btns { display: flex; gap: 11px; padding-right: 4px; text-indent: 0; font-weight: 400; }
  .dock-btns b { font-size: 10px; font-weight: 700; }
  .dock-btns .x { font-size: 14px; font-weight: 400; color: #555; }
  .nav-btn {
    height: 22px; width: 100%; flex: none; padding: 0; font: inherit; line-height: 1; color: #111; background: #ece9d8;
    border: 0; border-bottom: 1px solid #aca899; border-right: 1px solid #aca899;
  }
  .nav-btn.raised { background: #efede0; border-bottom: 2px solid #8e8c7e; border-right: 2px solid #8e8c7e; border-top: 1px solid #fff; }
  .side-x { height: 30px; padding-left: 6px; display: flex; align-items: center; flex: none; }
  .side-tree { flex: 1; background: #fff; overflow: hidden; width: 22px; }
  .side-tree .tree { margin-left: -25px; width: 200px; }

  .main { width: 767px; display: flex; flex-direction: column; }
  .bar-sub { height: 24px; padding-left: 5px; padding-bottom: 2px; background: #f1efe5; border-bottom: 1px solid #d8d5c4; box-sizing: border-box; }
  .grid {
    display: grid; grid-template-columns: 34px 73px 57px 35px 33px 201px 166px 156px 12px; grid-template-rows: 19px 34px 30px;
    background: #fff; margin-top: 2px; border-bottom: 0;
  }
  .gh { background: linear-gradient(#fbfaf5, #ece9d8); border-right: 1px solid #c4c2b4; border-bottom: 1px solid #d2d0c2; box-sizing: border-box; }
  .gh.hot { background: linear-gradient(#f8d888, #f0c060); }
  .gc { background: #b4d9fd; border-right: 1px solid #a9bcc8; border-bottom: 1px solid #b5b8b8; box-sizing: border-box; }
  .rowhead { background: #ffd284; margin-left: 2px; }
  .active { background: #a0c8f2; border-left: 1px solid #111; }
  .sym { display: flex; align-items: center; justify-content: center; font-size: 12px; }
  .last { background: #ece9d8; border: 0; }
  .shape svg { display: block; }
  .num { font-family: "Liberation Sans", sans-serif !important; font-size: 11px; fill: #111; }

  /* tree */
  .tree { position: relative; padding: 0; width: 214px; box-sizing: border-box; }
  .tree::before { content: ""; position: absolute; left: 13px; top: 8px; bottom: 8px; border-left: 1px dotted #999; }
  .node { display: flex; align-items: center; height: 16px; padding-left: 9px; position: relative; }
  .exp {
    width: 9px; height: 9px; box-sizing: border-box; border: 1px solid #808080; background: #fff; z-index: 1; flex: none;
    font: 10px/7px "Liberation Mono", monospace; text-align: center; color: #111;
  }
  .stub { width: 7px; border-top: 1px dotted #999; flex: none; }
  .node.child { padding-left: 33px; }
  .node.child::before { content: ""; position: absolute; left: 33px; top: -8px; height: 16px; border-left: 1px dotted #999; }
  .node.child .stub { width: 12px; }
  .node.child .ico { width: 13px; height: 13px; }
  .nlabel { margin-left: 3px; padding: 1px 2px; line-height: 14px; }
  .node.child .nlabel { margin-left: 3px; }
  .mono { font: 10px/14px "DejaVu Sans Mono", monospace; }
  .sel { background: #ece9d8; }

  /* browser */
  .browser {
    position: absolute; left: 932px; top: 0; right: 0; height: 664px; background: #fff; display: flex; flex-direction: column; overflow: hidden;
  }
  .bookmarks { height: 26px; flex: none; background: #f6f6f6; display: flex; align-items: flex-start; line-height: 14px; color: #333; white-space: nowrap; }
  .mark { display: flex; align-items: flex-start; }
  .more { margin-left: 7px; font-size: 16px; line-height: 13px; color: #888; }
  .tools { margin-left: auto; display: flex; align-items: center; gap: 6px; padding-right: 5px; height: 15px; }
  .dots { width: 2px; height: 13px; margin-right: 3px; background: repeating-linear-gradient(#bbb 0 2px, transparent 2px 5px); }
  .tabs {
    height: 27px; flex: none; background: #f6f6f6; border-bottom: 1px solid #b8b8b8; display: flex; align-items: flex-end; line-height: 1; white-space: nowrap; color: #333;
    box-sizing: content-box;
  }
  .tab { width: 182px; height: 26px; padding-left: 2px; display: flex; align-items: center; box-sizing: border-box; justify-content: space-between; padding-right: 6px; }
  .tab.on {
    width: 223px; background: #fff; border: 1px solid #b8b8b8; border-bottom: 0; border-radius: 3px 3px 0 0; margin-bottom: -1px; padding: 0 4px 0 6px; height: 28px; margin-left: 1px; gap: 3px; justify-content: flex-start;
  }
  .tab-t { width: 176px; overflow: hidden; flex: none; }
  .tx { font-size: 17px; color: #999; margin-left: auto; }
  .plus { width: 24px; height: 27px; text-align: center; font-size: 20px; line-height: 25px; color: #777; border-right: 1px solid #ccc; margin-left: 0; box-sizing: border-box; }
  .win { margin: 0 9px 6px auto; }
  .page { flex: 1; display: flex; flex-direction: column; min-height: 0; }
  .page-top { height: 48px; flex: none; border-bottom: 1px solid #ddd; }
  h1 {
    margin: 0; height: 62px; line-height: 68px; flex: none; font-size: 18px; font-weight: 400; padding-left: 13px; color: #444; background: #fcfcfc; border-bottom: 1px solid #ddd;
  }
  .stats { margin: 22px 0 0; height: 18px; line-height: 18px; font-size: 15px; padding-left: 11px; color: #3d78b6; flex: none; white-space: nowrap; }
  .ask { margin: 20px 0 0; height: 20px; line-height: 20px; font-size: 16px; padding-left: 14px; letter-spacing: .35px; color: #333; flex: none; white-space: nowrap; }
  .photo { margin: 1px 0 0 21px; flex: 1; background: #000; overflow: hidden; }
  .photo svg, .canvas svg { display: block; }

  /* floating page buttons */
  .float { position: absolute; right: 0; top: 454px; width: 34px; display: flex; flex-direction: column; gap: 10px; }
  .to-top { height: 40px; background: #bdbdbd; display: flex; align-items: center; justify-content: center; }
  .fbtn {
    height: 40px; background: #f4721f; color: #fff; font-size: 15px; line-height: 20px; padding-left: 5px; white-space: pre; overflow: hidden; letter-spacing: 0; box-sizing: border-box;
  }

  /* dialog */
  .dialog {
    position: absolute; left: 22px; top: 122px; width: 931px; height: 542px; background: #ece9d8; display: flex; flex-direction: column;
    border-radius: 8px 8px 0 0; overflow: hidden;
  }
  .title {
    height: 30px; flex: none; display: flex; align-items: center; padding: 0 5px 0 6px; box-sizing: border-box;
    background: linear-gradient(#2a7ff0 0, #0a58e0 3px, #0450d8 12px, #0a5ae2 24px, #0746c4 30px);
  }
  .title-ico { width: 16px; height: 16px; background: #1a90e8; border-radius: 3px; display: flex; align-items: center; justify-content: center; margin-right: 4px; }
  .title-t { color: #fff; font-size: 14px; font-weight: 700; line-height: 1; text-shadow: 1px 1px 0 #0a2a80; }
  .wbtns { margin-left: auto; display: flex; gap: 2px; }
  .wb {
    width: 21px; height: 21px; box-sizing: border-box; border: 1px solid #fff; border-radius: 3px; background: linear-gradient(135deg, #4a80e8, #2a58c8); display: block;
  }
  .wb svg { display: block; }
  .wb.close { background: linear-gradient(135deg, #f08a60, #d83c18); }
  .bar-dlg { height: 26px; padding-bottom: 2px; box-sizing: border-box; margin: 0 4px 0 5px; background: linear-gradient(#f9f8f2, #ece9d8); position: relative; }
  .grip { width: 2px; height: 18px; margin: 0 5px 0 3px; background: repeating-linear-gradient(#a9a797 0 2px, transparent 2px 4px); flex: none; }
  .bar-dlg .tb-item { margin-right: 7px; }
  .bar-dlg .sep { margin: 0 5px 0 -1px; }
  .chev { position: absolute; right: 4px; top: 0; font-size: 14px; font-weight: 700; line-height: 14px; }
  .dlg-body { flex: 1; display: flex; min-height: 0; margin: 3px 7px 0 5px; }
  .dlg-tree { width: 214px; margin-top: -1px; background: #fff; padding-top: 0; margin-right: 6px; flex: none; }
  .dlg-tree .tree { margin-top: 1px; }
  .canvas { width: 699px; flex: none; background: #000; }
  .dialog { border-right: 0; box-shadow: inset -4px 0 0 #0a46d2, inset 5px 0 0 #0a46d2; }

  /* cad */
  .cad { fill: none; }
  .t { font-size: 7.500px; fill: #dcdcdc; }
  .t.sm { font-size: 6.800px; }
  .t.c { fill: #1fd0d0; }
  .t.g { fill: #22e022; font-family: "Liberation Sans", sans-serif !important; }
  .wall path { fill: none; stroke: #c4c4c4; stroke-width: 2; }
  .wall .dash { stroke-dasharray: 5 2; }
  .wall .thin { stroke-width: 1.500; }
  .wall .tread { stroke-width: 1; stroke: #bbb; }
  .tb2 { stroke: #b8b8b8; stroke-width: 1.500; fill: none; }
  .tb { stroke: #cfcfcf; stroke-width: 1; fill: none; }
  .th { stroke: #b0b0b0; stroke-width: 1; fill: none; }
  .st { stroke: #b4b4b4; stroke-width: 1; fill: none; }
  .yb { stroke: #f4f400; stroke-width: 2.200; fill: none; }
  .yd { stroke: #f4f400; stroke-width: 1.500; stroke-dasharray: 2 6; fill: none; }
  .gr { stroke: #22b822; stroke-width: 1; fill: none; }
  .wh { stroke: #e8e8e8; stroke-width: 1; fill: none; }
  .ol { stroke: #7a7a10; stroke-width: 1.500; fill: none; }
  .ye { stroke: #dede30; stroke-width: 1; fill: none; }
  .gy { stroke: #8c8c8c; stroke-width: 1; fill: none; }
  .big { fill: #e4e4e4; font-family: "Liberation Sans", sans-serif !important; }
  .rd { font-size: 16px; fill: #b81a34; font-family: "Liberation Sans", sans-serif !important; }

  .annot { position: absolute; left: 0; top: 0; pointer-events: none; }
</style>
